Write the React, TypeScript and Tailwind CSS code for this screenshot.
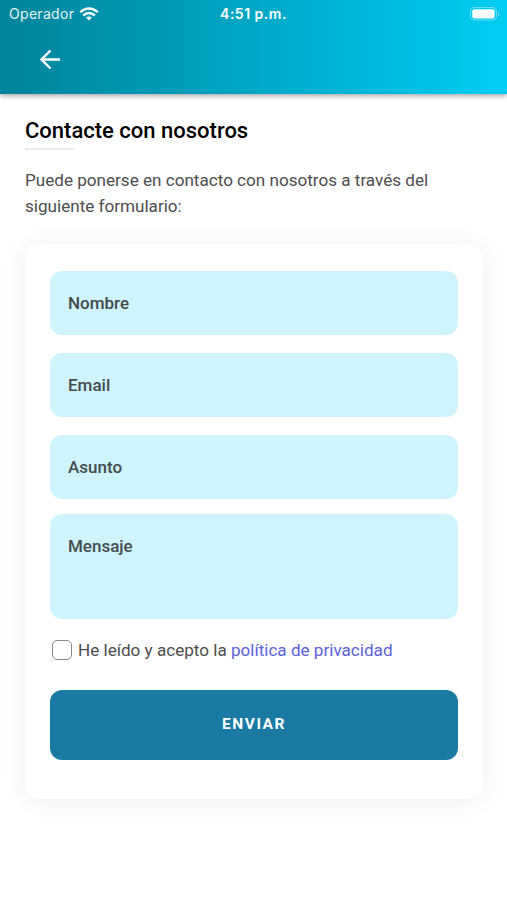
function Field({ label, className = '' }: { label: string; className?: string }) {
  return (
    <div className={`rounded-[12px] bg-[#cdf5fb] px-[18px] text-[17px] font-medium text-[#444b4e] ${className}`}>
      <span className="block pt-[20px] leading-[24px]">{label}</span>
    </div>
  );
}

export default function App() {
  return (
    <div className="h-[900px] w-[507px] overflow-hidden bg-white font-['Roboto',sans-serif] text-[#4d4d4d]">
      <header className="relative h-[94px] bg-linear-to-r from-[#00849a] to-[#00cdf3] text-white shadow-[0_2px_5px_rgba(0,0,0,0.35)]">
        <div className="grid h-[27px] grid-cols-3 items-center pr-[7px] pl-[9px] font-['Inter',sans-serif] text-[14px]">
          <div className="flex items-center gap-[5px]">
            <span className="tracking-[0.3px] text-white/90">Operador</span>
            <svg width="20" height="14" viewBox="0 0 20 14" fill="none" stroke="white" strokeWidth="2.4">
              <path d="M1.2 5.2Q10-2.4 18.8 5.2M4.2 8.5Q10 3.6 15.8 8.5" />
              <path d="M10 13.6 7 10.6Q10 8.2 13 10.6Z" fill="white" stroke="none" />
            </svg>
          </div>
          <span className="pr-[2px] text-center font-semibold tracking-[0.5px]">4:51 p.m.</span>
          <svg className="justify-self-end" width="30" height="14" viewBox="0 0 30 14" fill="none">
            <rect x=".5" y=".5" width="26" height="12.5" rx="3.5" stroke="white" strokeOpacity=".4" />
            <rect x="2.3" y="2.2" width="22.4" height="9.3" rx="2" fill="white" />
            <path d="M28 5v4q1.5-.5 1.5-2T28 5" fill="white" fillOpacity=".4" />
          </svg>
        </div>
        <button aria-label="Volver" className="mt-[22px] ml-[39px] block">
          <svg width="22" height="22" viewBox="0 0 22 22" fill="none" stroke="white" strokeWidth="2.4">
            <path d="M21 10.5H3M11.5 1.5 2.5 10.5l9 9" />
          </svg>
        </button>
      </header>
      <main className="pt-[23px] pr-[24px] pl-[25px]">
        <h1 className="text-[22px] leading-[28px] font-medium text-black">Contacte con nosotros</h1>
        <div className="mt-[3px] h-[2px] w-[49px] bg-[#e9eaec]" />
        <p className="mt-[17px] text-[17.1px] leading-[26px]">Puede ponerse en contacto con nosotros a través del siguiente formulario:</p>
        <form className="mt-[25px] h-[555px] rounded-[14px] bg-white px-[25px] pt-[27px] shadow-[0_2px_26px_rgba(0,0,0,0.065)]">
          <Field label="Nombre" className="h-[64px]" />
          <Field label="Email" className="mt-[18px] h-[64px]" />
          <Field label="Asunto" className="mt-[18px] h-[64px]" />
          <Field label="Mensaje" className="mt-[15px] h-[105px]" />
          <div className="mt-[20px] flex h-[24px] items-center text-[17.1px]">
            <span className="mr-[6px] mb-[3px] ml-[2px] size-[20px] rounded-[5px] border-[1.5px] border-[#888]" />
            <span>He leído y acepto la <a className="text-[#5b62d8]">política de privacidad</a></span>
          </div>
          <button type="button" className="mt-[27px] h-[70px] w-full rounded-[12px] bg-[#197ba3] text-[15.5px] font-bold tracking-[1.5px] text-white">ENVIAR</button>
        </form>
      </main>
    </div>
  );
}
